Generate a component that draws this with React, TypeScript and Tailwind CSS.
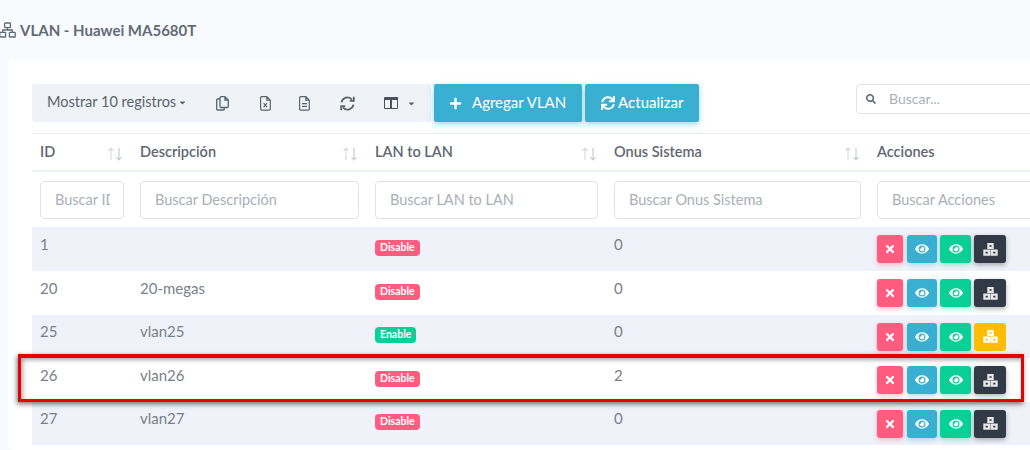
import React from "react";
import { FaEye, FaPlus, FaSearch, FaSync, FaTimes, FaCaretDown } from "react-icons/fa";

const cols = "grid grid-cols-[100px_235px_239px_263px_170px]";

function Sort() {
  return (
    <svg width="16" height="14" viewBox="0 0 16 14" fill="none" stroke="#d3d7dd" strokeWidth="1.1" className="mt-[3px]">
      <path d="M4 13V1M1.5 3.8 4 1l2.5 2.8" />
      <path d="M12 1v12M9.5 10.2 12 13l2.5-2.8" stroke="#c2c7ce" />
    </svg>
  );
}

function Head({ label }: { label: string }) {
  return (
    <div className="flex items-center justify-between pl-2 pr-[9px]">
      <span className="text-[14.5px] font-semibold text-[#5f6670]">{label}</span>
      <Sort />
    </div>
  );
}

function Filter({ label, w, clip }: { label: string; w: string; clip?: string }) {
  return (
    <div className={"ml-2 h-[38px] rounded-[4px] border border-[#dfe3e8] flex items-center pl-[14px] text-[14.5px] text-[#a9afb8] overflow-hidden whitespace-nowrap bg-white " + w}>
      <span className={"block overflow-hidden " + (clip ?? "")}>{label}</span>
    </div>
  );
}

function Net({ className }: { className?: string }) {
  return (
    <svg width="15" height="13" viewBox="0 0 15 13" className={className}>
      <path
        fillRule="evenodd"
        fill="currentColor"
        d="M4.3 0h6.4v6h-6.4zM6.4 2.2v1.5h2.2V2.2zM0.3 6.4h7v6.3h-7zM2.6 8.7v1.7h2.2V8.7zM7.7 6.4h7v6.3h-7zM10.2 8.7v1.7h2.2V8.7z"
      />
    </svg>
  );
}

function TitleNet() {
  return (
    <svg width="17" height="16" viewBox="0 0 17 16" fill="none" stroke="#626b76" strokeWidth="1.3" className="shrink-0 -ml-[1px]">
      <rect x="5.6" y="1" width="5.8" height="4.6" rx="0.6" />
      <rect x="0.8" y="10.4" width="5.8" height="4.6" rx="0.6" />
      <rect x="10.4" y="10.4" width="5.8" height="4.6" rx="0.6" />
      <path d="M8.5 5.6v2.4M3.7 10.4V8h9.6v2.4" />
    </svg>
  );
}

function Act({ bg, shadow, w, children }: { bg: string; shadow: string; w: string; children: React.ReactNode }) {
  return (
    <span className={"h-[28px] rounded-[3px] flex items-center justify-center text-white " + bg + " " + shadow + " " + w}>
      {children}
    </span>
  );
}

function Row({ id, d, on, n, odd, warn, h }: { id: string; d: string; on?: boolean; n: string; odd: boolean; warn?: boolean; h: string }) {
  return (
    <div className={cols + " items-center text-[15px] text-[#7a808a] " + h + " " + (odd ? "bg-[#eff2f9]" : "bg-white")}>
      <div className="pl-2 -translate-y-[5px]">{id}</div>
      <div className="pl-2 -translate-y-[5px]">{d}</div>
      <div className="pl-2 -translate-y-[4px]">
        {on ? (
          <span className="inline-flex items-center h-[16px] px-[5px] rounded-[4px] bg-[#0acf97] text-white text-[10.5px] font-bold">Enable</span>
        ) : (
          <span className="inline-flex items-center h-[16px] px-[5px] rounded-[4px] bg-[#ff5c7f] text-white text-[10.5px] font-bold">Disable</span>
        )}
      </div>
      <div className="pl-2 -translate-y-[5px]">{n}</div>
      <div className="pl-2 flex gap-[3px]">
        <Act bg="bg-[#ff5c7f] mr-[1px]" shadow="shadow-[0_2px_5px_rgba(255,92,127,0.4)]" w="w-[26px]"><FaTimes className="text-[12px]" /></Act>
        <Act bg="bg-[#39afd1]" shadow="shadow-[0_2px_5px_rgba(57,175,209,0.4)]" w="w-[30px]"><FaEye className="text-[14px]" /></Act>
        <Act bg="bg-[#0acf97]" shadow="shadow-[0_2px_5px_rgba(10,207,151,0.4)]" w="w-[31px]"><FaEye className="text-[14px]" /></Act>
        {warn ? (
          <Act bg="bg-[#ffbc00]" shadow="" w="w-[32px]"><Net /></Act>
        ) : (
          <Act bg="bg-[#313a46]" shadow="shadow-[0_2px_5px_rgba(49,58,70,0.4)]" w="w-[32px]"><Net className="text-[#e8e8e8]" /></Act>
        )}
      </div>
    </div>
  );
}

export default function App() {
  return (
    <div className="relative w-[1030px] h-[450px] overflow-hidden bg-[#f9fafd] font-['Lato','Noto_Sans',sans-serif]">
      <div className="h-[60px] flex items-center gap-[4px] text-[#626b76]">
        <TitleNet />
        <span className="text-[15px] font-bold">VLAN - Huawei MA5680T</span>
      </div>
      <div className="ml-2 w-[1060px] h-[390px] bg-white rounded-[5px] pl-6 pt-6">
        <div className="flex items-start h-[50px] border-b border-[#e8ebef]">
          <div className="flex items-center h-[38px] w-[399px] bg-[#eff2f7] rounded-[3px] text-[#5c646e]">
            <span className="ml-[15px] -translate-y-[1px] text-[14.5px] w-[141px] flex items-center gap-[2px] whitespace-nowrap">Mostrar 10 registros<FaCaretDown className="text-[9px]" /></span>
            <svg width="13" height="15" viewBox="0 0 13 15" fill="none" stroke="currentColor" strokeWidth="1.3" className="ml-[28px]">
              <path d="M4 3H1.7a1 1 0 0 0-1 1v9a1 1 0 0 0 1 1h5.6a1 1 0 0 0 1-1v-1.5" />
              <path d="M4 1.7a1 1 0 0 1 1-1h4l3.3 3.3v6.5a1 1 0 0 1-1 1H5a1 1 0 0 1-1-1zM9 .7V4h3.3" />
            </svg>
            <svg width="11" height="15" viewBox="0 0 11 15" fill="none" stroke="currentColor" strokeWidth="1.2" className="ml-[31px]">
              <path d="M1.6.7h5.2l3.5 3.5v8.9a1 1 0 0 1-1 1H1.6a1 1 0 0 1-1-1V1.7a1 1 0 0 1 1-1zM6.8.7v3.5h3.5" />
              <path d="M3.6 7.2l3.4 4M7 7.2l-3.4 4" />
            </svg>
            <svg width="11" height="15" viewBox="0 0 11 15" fill="none" stroke="currentColor" strokeWidth="1.2" className="ml-[28px]">
              <path d="M1.6.7h5.2l3.5 3.5v8.9a1 1 0 0 1-1 1H1.6a1 1 0 0 1-1-1V1.7a1 1 0 0 1 1-1zM6.8.7v3.5h3.5" />
              <path d="M3 7.6h5M3 10.4h5" />
            </svg>
            <svg width="15" height="15" viewBox="0 0 15 15" fill="none" stroke="currentColor" strokeWidth="1.8" className="ml-[30px]">
              <path d="M1.5 6.3A6 6 0 0 1 12 3.6" />
              <path d="M13.5 8.7A6 6 0 0 1 3 11.4" />
              <path d="M13.8.8v4h-4M1.2 14.2v-4h4" />
            </svg>
            <span className="ml-[29px] w-[14px] h-[12px] border-[1.5px] border-[#4a525c] border-t-[3px] rounded-[1px] flex justify-center"><span className="w-[1.5px] bg-[#4a525c]" /></span>
            <FaCaretDown className="ml-[9px] text-[9px]" />
          </div>
          <div className="ml-[3px] h-[38px] w-[148px] rounded-[2px] bg-[#39afd1] text-white flex items-center pl-[15px] gap-[10px] text-[15px] shadow-[0_2px_6px_rgba(57,175,209,0.5)]">
            <FaPlus className="text-[13px]" /><span className="-translate-y-[1px]">Agregar VLAN</span>
          </div>
          <div className="ml-[3px] h-[38px] w-[114px] rounded-[2px] bg-[#39afd1] text-white flex items-center pl-[16px] gap-[3px] text-[15px] font-medium shadow-[0_2px_6px_rgba(57,175,209,0.5)]">
            <FaSync className="text-[14px]" /><span className="-translate-y-[1px]">Actualizar</span>
          </div>
          <div className="ml-[157px] h-[30px] w-[200px] rounded-[4px] border border-[#dfe3e8] flex items-center text-[14px] text-[#a9afb8]">
            <FaSearch className="ml-[9px] mr-[13px] text-[10px] text-[#5f6670]" /><span className="-translate-y-[1px]">Buscar...</span>
          </div>
        </div>
        <div className={cols + " h-[38px] border-b-2 border-[#edf0f4]"}>
          <Head label="ID" />
          <Head label="Descripción" />
          <Head label="LAN to LAN" />
          <Head label="Onus Sistema" />
          <div className="flex items-center pl-2"><span className="text-[14.5px] font-semibold text-[#5f6670]">Acciones</span></div>
        </div>
        <div className={cols + " h-[55px] items-start pt-[9px]"}>
          <Filter label="Buscar ID" w="w-[84px]" clip="w-[55px]" />
          <Filter label="Buscar Descripción" w="w-[219px]" />
          <Filter label="Buscar LAN to LAN" w="w-[223px]" />
          <Filter label="Buscar Onus Sistema" w="w-[247px]" />
          <Filter label="Buscar Acciones" w="w-[170px]" />
        </div>
        <Row id="1" d="" n="0" odd h="h-[44px]" />
        <Row id="20" d="20-megas" n="0" odd={false} h="h-[44px]" />
        <Row id="25" d="vlan25" n="0" on warn odd h="h-[43px]" />
        <Row id="26" d="vlan26" n="2" odd={false} h="h-[44px]" />
        <Row id="27" d="vlan27" n="0" odd h="h-[43px]" />
      </div>
      <div className="absolute left-[18px] top-[354px] w-[1006px] h-[48px] border-[3px] border-t-4 border-[#e60000] shadow-[-1px_2px_5px_rgba(0,0,0,0.55),inset_2px_2px_4px_rgba(0,0,0,0.35)]" />
    </div>
  );
}
